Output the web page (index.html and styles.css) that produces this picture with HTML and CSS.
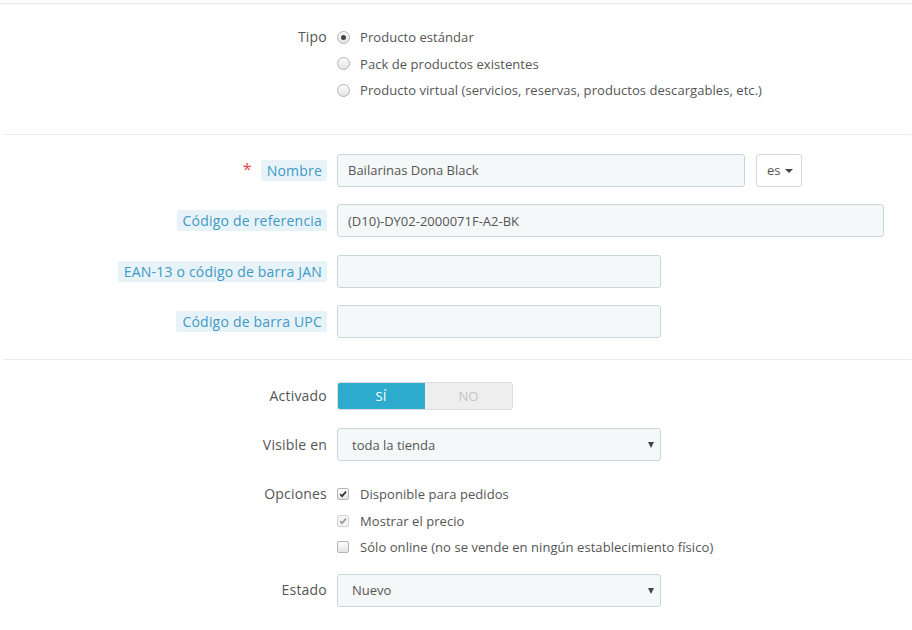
FILE: index.html
```html
<!DOCTYPE html>
<html lang="es">
<head>
<meta charset="utf-8">
<title>Producto</title>
<link rel="stylesheet" href="styles.css">
</head>
<body>
<div class="page">
  <section class="sec sec-type">
    <div class="row">
      <div class="lbl"><span class="plain tall">Tipo</span></div>
      <div class="field stack">
        <div class="opt"><span class="radio on"></span>Producto estándar</div>
        <div class="opt"><span class="radio"></span>Pack de productos existentes</div>
        <div class="opt"><span class="radio"></span>Producto virtual (servicios, reservas, productos descargables, etc.)</div>
      </div>
    </div>
  </section>
  <hr class="sep">
  <section class="sec sec-info">
    <div class="row">
      <div class="lbl"><span class="req">*</span><span class="tip">Nombre</span></div>
      <div class="field inline">
        <div class="input w-name">Bailarinas Dona Black</div>
        <div class="lang">es<span class="caret"></span></div>
      </div>
    </div>
    <div class="row">
      <div class="lbl"><span class="tip">Código de referencia</span></div>
      <div class="field"><div class="input w-ref">(D10)-DY02-2000071F-A2-BK</div></div>
    </div>
    <div class="row">
      <div class="lbl"><span class="tip">EAN-13 o código de barra JAN</span></div>
      <div class="field"><div class="input w-md"></div></div>
    </div>
    <div class="row">
      <div class="lbl"><span class="tip">Código de barra UPC</span></div>
      <div class="field"><div class="input w-md"></div></div>
    </div>
  </section>
  <hr class="sep">
  <section class="sec sec-opts">
    <div class="row row-switch">
      <div class="lbl"><span class="plain">Activado</span></div>
      <div class="field">
        <div class="switch"><span class="sw-on">SÍ</span><span class="sw-off">NO</span></div>
      </div>
    </div>
    <div class="row row-select">
      <div class="lbl"><span class="plain">Visible en</span></div>
      <div class="field"><div class="select w-md">toda la tienda<span class="arrow"></span></div></div>
    </div>
    <div class="row row-checks">
      <div class="lbl"><span class="plain tall">Opciones</span></div>
      <div class="field stack">
        <div class="opt"><span class="check on"><svg viewBox="0 0 12 12" width="12" height="12"><path d="M2.6 6.2 L4.9 8.6 L9.6 3.2" fill="none" stroke="#333" stroke-width="2"/></svg></span>Disponible para pedidos</div>
        <div class="opt"><span class="check dis"><svg viewBox="0 0 12 12" width="12" height="12"><path d="M2.6 6.2 L4.9 8.6 L9.6 3.2" fill="none" stroke="#9a9a9a" stroke-width="2"/></svg></span>Mostrar el precio</div>
        <div class="opt"><span class="check"></span>Sólo online (no se vende en ningún establecimiento físico)</div>
      </div>
    </div>
    <div class="row row-select2">
      <div class="lbl"><span class="plain">Estado</span></div>
      <div class="field"><div class="select w-md">Nuevo<span class="arrow"></span></div></div>
    </div>
  </section>
</div>
</body>
</html>
```
FILE: styles.css
```css
* { box-sizing: border-box; }
html, body { margin: 0; padding: 0; background: #fff; }
body {
  font-family: "Open Sans", "Liberation Sans", Arial, sans-serif;
  font-size: 13px;
  color: #555;
  width: 912px;
  height: 630px;
  overflow: hidden;
}
.page {
  margin-top: 3px;
  border-top: 1px solid #e8e8e8;
}
.sep {
  border: 0;
  height: 1px;
  background: #ebebeb;
  margin: 0 1px 0 3px;
}
.sec-type { padding: 20px 0 30px; }
.sec-info { padding: 19px 0 21px; display: flex; flex-direction: column; gap: 17.5px; }
.sec-opts { padding: 22px 0 0; display: flex; flex-direction: column; }
.row {
  display: grid;
  grid-template-columns: 327px 1fr;
  column-gap: 10px;
  align-items: center;
}
.row-checks, .sec-type .row { align-items: start; }
.row-select { margin-top: 18px; }
.row-checks { margin-top: 20px; }
.row-select2 { margin-top: 13px; }
.lbl {
  text-align: right;
  display: flex;
  justify-content: flex-end;
  align-items: center;
  font-size: 14px;
  letter-spacing: 0.2px;
  white-space: nowrap;
}
.plain { line-height: 20px; }
.plain.tall { line-height: 26.5px; }
.tip {
  display: inline-block;
  background: #e7f3f9;
  color: #3f9ac4;
  padding: 1px 5px 0 6px;
  line-height: 20px;
  border-radius: 2px;
}
.req {
  color: #e44;
  font-size: 16px;
  margin-right: 9px;
  position: relative;
  top: -1px;
}
.stack { display: flex; flex-direction: column; }
.opt {
  display: flex;
  align-items: center;
  height: 26.5px;
  white-space: nowrap;
  letter-spacing: 0.06px;
}
.radio {
  width: 13px;
  height: 13px;
  border-radius: 50%;
  border: 1px solid #b3b3b3;
  background: linear-gradient(#fcfcfc, #e3e3e3);
  margin: 0 10px 0 0;
  position: relative;
  flex: none;
}
.radio.on::after {
  content: "";
  position: absolute;
  left: 3px; top: 3px;
  width: 5px; height: 5px;
  border-radius: 50%;
  background: #444;
}
.check {
  width: 12px;
  height: 12px;
  border: 1px solid #b5b5b5;
  border-radius: 2px;
  background: linear-gradient(#fdfdfd, #e4e4e4);
  margin: 0 11px 0 0;
  flex: none;
  display: flex;
  align-items: center;
  justify-content: center;
}
.check svg { display: block; width: 10px; height: 10px; }
.check.dis { border-color: #d2d2d2; background: #f4f4f4; }
.inline { display: flex; align-items: center; gap: 11px; }
.input, .select {
  height: 33px;
  background: #f5f8f9;
  border: 1px solid #c7d6db;
  border-radius: 3px;
  padding: 0 10px;
  display: flex;
  align-items: center;
  color: #555;
}
.w-name { width: 408px; }
.w-ref { width: 547px; }
.w-md { width: 324px; }
.lang {
  width: 46px;
  height: 33px;
  background: #fff;
  border: 1px solid #d6d6d6;
  border-radius: 3px;
  display: flex;
  align-items: center;
  padding-left: 10px;
  color: #555;
}
.caret {
  display: inline-block;
  width: 0; height: 0;
  border-left: 4px solid transparent;
  border-right: 4px solid transparent;
  border-top: 4px solid #444;
  margin-left: 4px;
  margin-top: 1px;
}
.switch {
  width: 176px;
  height: 28px;
  display: flex;
  border-radius: 3px;
  overflow: hidden;
  border: 1px solid #dcdcdc;
}
.sw-on {
  width: 88px;
  background: #2eaccd;
  color: #fff;
  display: flex;
  align-items: center;
  justify-content: center;
  margin: -1px 0 -1px -1px;
  border-radius: 3px 0 0 3px;
}
.sw-off {
  flex: 1;
  background: #eeeeee;
  color: #c4c4c4;
  display: flex;
  align-items: center;
  justify-content: center;
}
.select {
  position: relative;
  padding-left: 14px;
}
.arrow {
  position: absolute;
  right: 6px;
  top: 13px;
  width: 0; height: 0;
  border-left: 3.5px solid transparent;
  border-right: 3.5px solid transparent;
  border-top: 6px solid #444;
}
```
